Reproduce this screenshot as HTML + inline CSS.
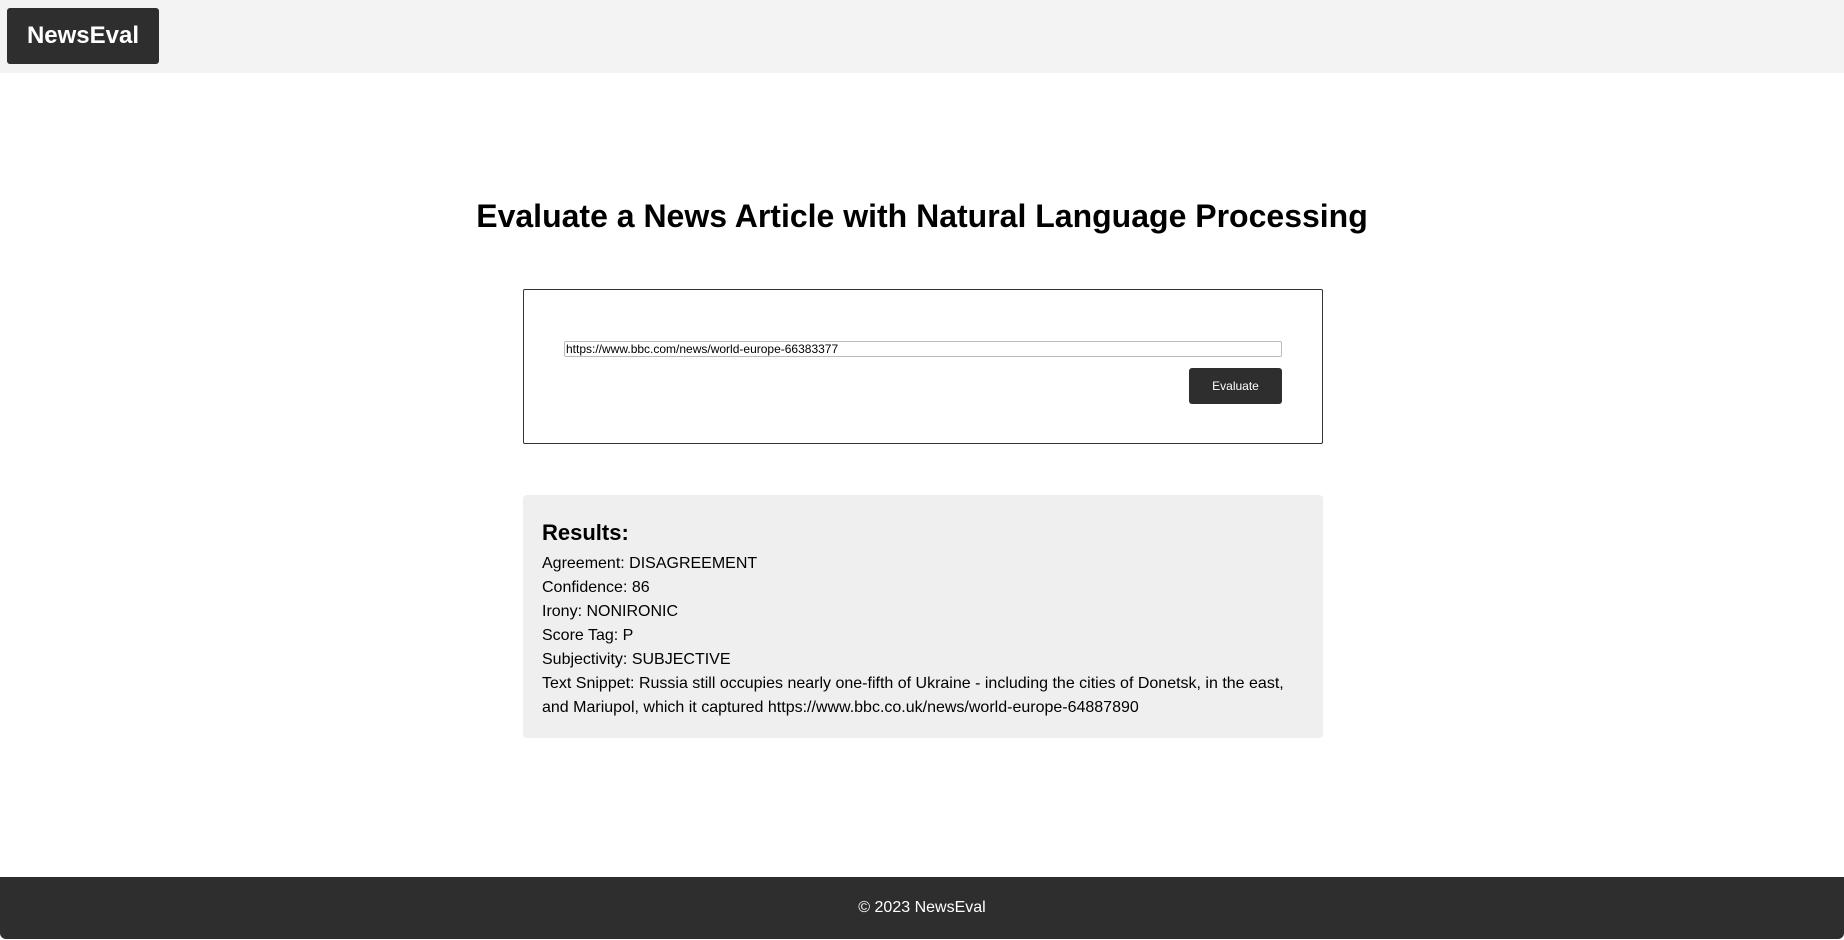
<!DOCTYPE html>
<html><head><meta charset="utf-8"><style>
*{margin:0;padding:0;box-sizing:border-box}
body{width:1844px;height:940px;position:relative;background:#fff;font-family:"Liberation Sans",Arial,sans-serif;overflow:hidden}
.hdr{position:absolute;left:0;top:0;width:1844px;height:73px;background:#f3f3f3}
.logo{position:absolute;left:7px;top:8px;width:152px;height:56px;background:#2e2e2e;border-radius:3px;color:#fff;font-weight:bold;font-size:24px;line-height:56px;text-align:center}
h1{position:absolute;left:0;width:1844px;top:194px;text-align:center;font-size:32px;line-height:44px;font-weight:bold;color:#000}
.form{position:absolute;left:523px;top:289px;width:800px;height:155px;border:1px solid #333;border-radius:2px}
.inp{position:absolute;left:40px;top:51px;width:718px;height:16px;border:1px solid #bbb;border-radius:2px;font-size:12px;line-height:14px;padding-left:1px;color:#000}
.btn{position:absolute;left:665px;top:78px;width:93px;height:36px;background:#2e2e2e;border-radius:3px;color:#fff;font-size:12px;line-height:36px;text-align:center}
.res{position:absolute;left:523px;top:495px;width:800px;height:243px;background:#efefef;border-radius:4px;padding:24px 19px}
.res h2{font-size:22px;line-height:28px;font-weight:bold;margin-bottom:5px}
.res p{font-size:16px;line-height:24px;color:#000}
.ftr{position:absolute;left:0;top:877px;width:1844px;height:62px;background:#2e2e2e;color:#fff;font-size:16px;line-height:62px;text-align:center;border-radius:0 0 6px 6px}
</style></head><body>
<div class="hdr"><div class="logo">NewsEval</div></div>
<h1>Evaluate a News Article with Natural Language Processing</h1>
<div class="form">
<div class="inp">https://www.bbc.com/news/world-europe-66383377</div>
<div class="btn">Evaluate</div>
</div>
<div class="res">
<h2>Results:</h2>
<p>Agreement: DISAGREEMENT<br>Confidence: 86<br>Irony: NONIRONIC<br>Score Tag: P<br>Subjectivity: SUBJECTIVE<br>Text Snippet: Russia still occupies nearly one-fifth of Ukraine - including the cities of Donetsk, in the east, and Mariupol, which it captured https://www.bbc.co.uk/news/world-europe-64887890</p>
</div>
<div class="ftr">© 2023 NewsEval</div>
</body></html>
